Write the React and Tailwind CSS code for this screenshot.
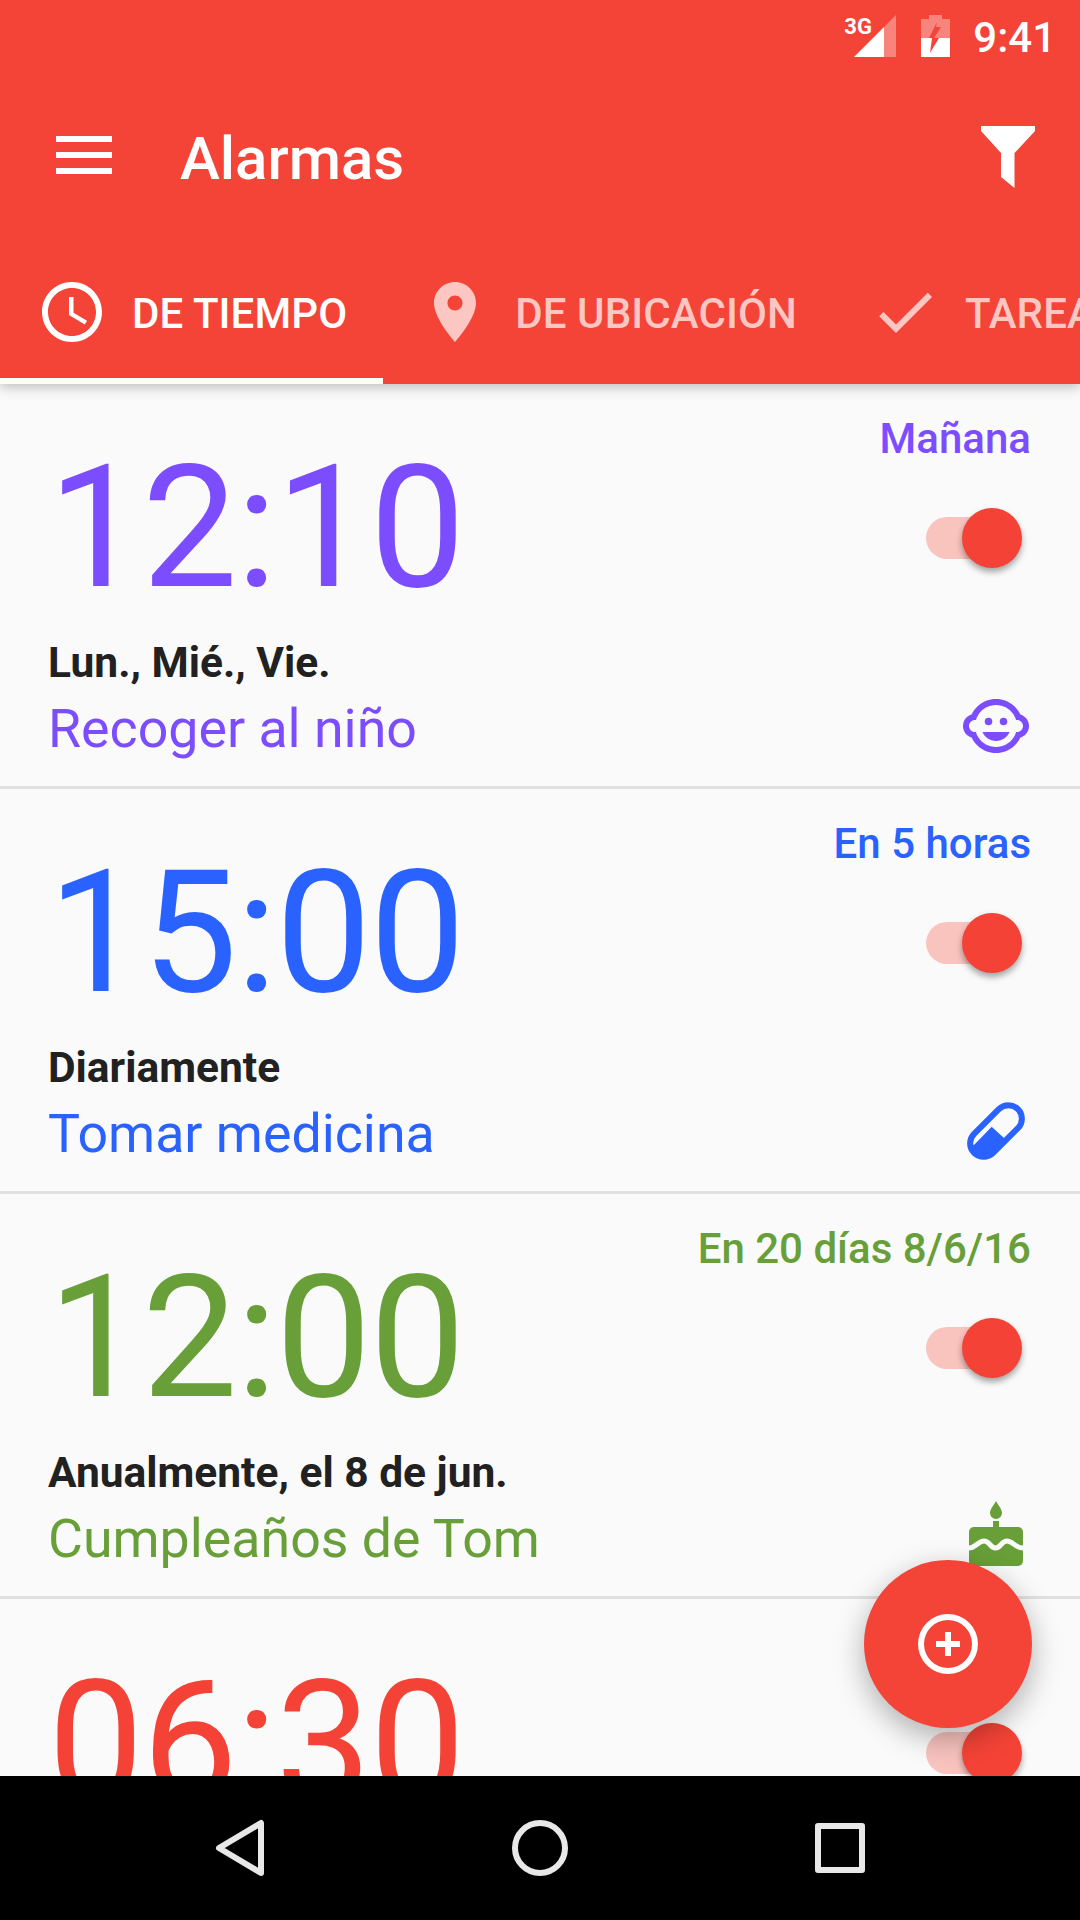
const alarms = [
  { time: "12:10", when: "Mañana", repeat: "Lun., Mié., Vie.", label: "Recoger al niño", color: "text-[#7c4dff]", icon: "baby" },
  { time: "15:00", when: "En 5 horas", repeat: "Diariamente", label: "Tomar medicina", color: "text-[#2962ff]", icon: "pill" },
  { time: "12:00", when: "En 20 días 8/6/16", repeat: "Anualmente, el 8 de jun.", label: "Cumpleaños de Tom", color: "text-[#689f38]", icon: "cake" },
  { time: "06:30", when: "", repeat: "", label: "", color: "text-[#f44336]", icon: null },
];

function BabyIcon() {
  return (
    <svg viewBox="0 0 24 24" className="w-[72px] h-[72px]" fill="currentColor">
      <circle cx="14.5" cy="10.5" r="1.25" />
      <circle cx="9.5" cy="10.5" r="1.25" />
      <path d="M22.94 12.66c.04-.21.06-.43.06-.66s-.02-.45-.06-.66c-.25-1.51-1.36-2.74-2.81-3.17-.53-1.12-1.28-2.1-2.19-2.91C16.36 3.85 14.28 3 12 3s-4.36.85-5.94 2.26c-.92.81-1.67 1.8-2.19 2.91-1.45.43-2.56 1.65-2.81 3.17-.04.21-.06.43-.06.66s.02.45.06.66c.25 1.51 1.36 2.74 2.81 3.17.52 1.11 1.27 2.09 2.17 2.89C7.62 20.14 9.71 21 12 21s4.38-.86 5.97-2.28c.9-.8 1.65-1.79 2.17-2.89 1.44-.43 2.55-1.65 2.8-3.17zM19 14c-.1 0-.19-.02-.29-.03-.2.67-.49 1.29-.86 1.86C16.6 17.74 14.45 19 12 19s-4.6-1.26-5.85-3.17c-.37-.57-.66-1.19-.86-1.86-.1.01-.19.03-.29.03-1.1 0-2-.9-2-2s.9-2 2-2c.1 0 .19.02.29.03.2-.67.49-1.29.86-1.86C7.4 6.26 9.55 5 12 5s4.6 1.26 5.85 3.17c.37.57.66 1.19.86 1.86.1-.01.19-.03.29-.03 1.1 0 2 .9 2 2s-.9 2-2 2zM7.5 14c.76 1.77 2.49 3 4.5 3s3.74-1.23 4.5-3h-9z" />
    </svg>
  );
}

function PillIcon() {
  return (
    <svg viewBox="0 0 72 72" className="w-[72px] h-[72px]" fill="currentColor">
      <clipPath id="pill-body">
        <rect x="5" y="22.5" width="62" height="27" rx="13.5" transform="rotate(-45 36 36)" />
      </clipPath>
      <path d="M14 50 L31.700 31.700 L45 44 L30 72 L0 72 L0 50 Z" clipPath="url(#pill-body)" />
      <rect x="5" y="22.5" width="62" height="27" rx="13.5" transform="rotate(-45 36 36)" fill="none" stroke="currentColor" strokeWidth="6" />
    </svg>
  );
}

function CakeIcon() {
  return (
    <svg viewBox="0 6 72 72" className="w-[72px] h-[72px]" fill="currentColor">
      <path d="M36 7 C38 11 42 15 42 19 A6 6 0 0 1 30 19 C30 15 34 11 36 7 Z" />
      <rect x="33" y="27" width="6" height="8" />
      <rect x="9" y="33" width="54" height="39" rx="5" />
      <path d="M9 54 C16 54 18 47 24 47 C30 47 30 54 35.500 54 C41 54 41 47 47 47 C53 47 55 54 63 54" fill="none" stroke="#fafafa" strokeWidth="5" />
    </svg>
  );
}

function AlarmIcon({ name }) {
  if (name === "baby") return <BabyIcon />;
  if (name === "pill") return <PillIcon />;
  if (name === "cake") return <CakeIcon />;
  return null;
}

function Toggle() {
  return (
    <div className="relative w-[96px] h-[60px] flex items-center">
      <div className="w-[84px] h-[42px] rounded-full bg-[#f9c3be]" />
      <div className="absolute right-0 top-0 w-[60px] h-[60px] rounded-full bg-[#f44336] shadow-[0_4px_6px_rgba(0,0,0,0.35)]" />
    </div>
  );
}

function AlarmRow({ alarm }) {
  return (
    <div className={`flex justify-between h-[405px] shrink-0 border-b-[3px] border-[#e0e0e0] pl-[48px] pr-[49px] ${alarm.color}`}>
      <div className="flex flex-col">
        <div className="mt-[44px] text-[170px] leading-[200px] font-normal tracking-[-1.5px]">{alarm.time}</div>
        <div className="mt-[10px] text-[42.5px] leading-[50px] font-bold text-[#212121]">{alarm.repeat}</div>
        <div className="mt-[11px] text-[53.7px] leading-[60px]">{alarm.label}</div>
      </div>
      <div className="flex flex-col items-end">
        <div className="mt-[31px] h-[48px] text-[42px] leading-[48px] font-medium">{alarm.when}</div>
        <div className="mt-[45px] mr-[9px]"><Toggle /></div>
        <div className="mt-[122px] mr-[-1px]"><AlarmIcon name={alarm.icon} /></div>
      </div>
    </div>
  );
}

function ClockIcon() {
  return (
    <svg viewBox="0 0 24 24" className="w-[72px] h-[72px]" fill="currentColor">
      <path d="M11.990 2C6.470 2 2 6.480 2 12s4.470 10 9.990 10C17.520 22 22 17.520 22 12S17.520 2 11.990 2zM12 20c-4.420 0-8-3.580-8-8s3.580-8 8-8 8 3.580 8 8-3.580 8-8 8z" />
      <path d="M12.500 7H11v6l5.250 3.150.75-1.230-4.500-2.670z" />
    </svg>
  );
}

function PinIcon() {
  return (
    <svg viewBox="0 0 24 24" className="w-[72px] h-[72px]" fill="currentColor">
      <path d="M12 2C8.130 2 5 5.130 5 9c0 5.250 7 13 7 13s7-7.750 7-13c0-3.870-3.130-7-7-7zm0 9.500c-1.380 0-2.500-1.120-2.500-2.500s1.120-2.500 2.500-2.500 2.500 1.120 2.500 2.500-1.120 2.500-2.500 2.500z" />
    </svg>
  );
}

function CheckIcon() {
  return (
    <svg viewBox="0 0 24 24" className="w-[72px] h-[72px]" fill="currentColor">
      <path d="M9 16.170L4.830 12l-1.420 1.410L9 19 21 7l-1.410-1.410z" />
    </svg>
  );
}

const tabs = [
  { label: "DE TIEMPO", Icon: ClockIcon, active: true },
  { label: "DE UBICACIÓN", Icon: PinIcon },
  { label: "TAREAS", Icon: CheckIcon },
];

function Header() {
  return (
    <header className="relative z-10 shrink-0 h-[384px] bg-[#f44438] text-white shadow-[0_3px_12px_rgba(0,0,0,0.25)]">
      <div className="h-[72px] flex items-center justify-end pr-[24px]">
        <div className="relative w-[52px] h-[42px] mr-[25px]">
          <span className="absolute left-0 -top-[1px] text-[22px] leading-[26px] font-bold">3G</span>
          <svg viewBox="0 0 42 42" className="absolute left-[10px] top-0 w-[42px] h-[42px]">
            <path d="M30 42 H42 V0 L30 12 Z" fill="#ffffff" fillOpacity="0.35" />
            <path d="M0 42 H30 V12 Z" fill="#ffffff" />
          </svg>
        </div>
        <svg viewBox="0 0 29 42" className="w-[29px] h-[42px] mr-[23px]">
          <path fillRule="evenodd" d="M0 4 H8 V0 H21 V4 H29 V23 H0 Z M16 7 L8 23 H13 V23 L20 12 H15 Z" fill="#ffffff" fillOpacity="0.35" />
          <path fillRule="evenodd" d="M0 23 H11 L9 38 L18 23 H29 V42 H0 Z" fill="#ffffff" />
        </svg>
        <span className="mt-[3px] text-[42px] leading-[48px] font-medium">9:41</span>
      </div>
      <div className="h-[168px] flex items-center pl-[56px] pr-[45px]">
        <div className="w-[56px] h-[38px] flex flex-col justify-between -mt-[2px]">
          <div className="h-[6px] bg-white" />
          <div className="h-[6px] bg-white" />
          <div className="h-[6px] bg-white" />
        </div>
        <h1 className="ml-[68px] flex-1 text-[60px] leading-[64px] font-medium mt-[6px]">Alarmas</h1>
        <svg viewBox="0 0 54 62" className="w-[54px] h-[62px] mt-[2px]" fill="currentColor">
          <path d="M0 0 H54 V5 L33.500 27 V62 L20 51 V27 L0 5 Z" />
        </svg>
      </div>
      <div className="h-[144px] flex overflow-hidden">
        {tabs.map(({ label, Icon, active }) => (
          <div key={label} className={`relative shrink-0 flex items-center gap-6 px-9 h-[144px] ${active ? "text-white" : "text-[#fcc7c3]"}`}>
            <Icon />
            <span className="mt-[4px] text-[42px] leading-[48px] font-medium tracking-[0.1px]">{label}</span>
            {active && <div className="absolute left-0 right-0 bottom-0 h-[6px] bg-white" />}
          </div>
        ))}
      </div>
    </header>
  );
}

function NavBar() {
  return (
    <nav className="relative z-20 shrink-0 h-[144px] bg-black flex justify-center items-center text-[#e8e8e8]">
      <div className="w-[300px] flex justify-center">
        <svg viewBox="0 0 72 72" className="w-[72px] h-[72px]" fill="none" stroke="currentColor" strokeWidth="6" strokeLinejoin="round">
          <path d="M15 36 L57 11 V61 Z" />
        </svg>
      </div>
      <div className="w-[300px] flex justify-center">
        <div className="w-[56px] h-[56px] rounded-full border-[6px] border-current" />
      </div>
      <div className="w-[300px] flex justify-center">
        <div className="w-[50px] h-[50px] rounded-[3px] border-[6px] border-current" />
      </div>
    </nav>
  );
}

export default function App() {
  return (
    <div className="relative w-[1080px] h-[1920px] flex flex-col overflow-hidden bg-[#fafafa] font-['Roboto',sans-serif]">
      <Header />
      <main className="flex-1 min-h-0 overflow-hidden">
        {alarms.map((alarm) => (
          <AlarmRow key={alarm.time} alarm={alarm} />
        ))}
      </main>
      <NavBar />
      <button className="absolute z-10 left-[864px] top-[1560px] w-[168px] h-[168px] rounded-full bg-[#f44438] flex items-center justify-center shadow-[0_10px_30px_rgba(0,0,0,0.3)]">
        <svg viewBox="0 0 60 60" className="w-[60px] h-[60px]" fill="#ffffff">
          <path fillRule="evenodd" d="M30 0 A30 30 0 1 1 30 60 A30 30 0 1 1 30 0 Z M30 6 A24 24 0 1 0 30 54 A24 24 0 1 0 30 6 Z" />
          <path d="M27 18 H33 V27 H42 V33 H33 V42 H27 V33 H18 V27 H27 Z" />
        </svg>
      </button>
    </div>
  );
}
